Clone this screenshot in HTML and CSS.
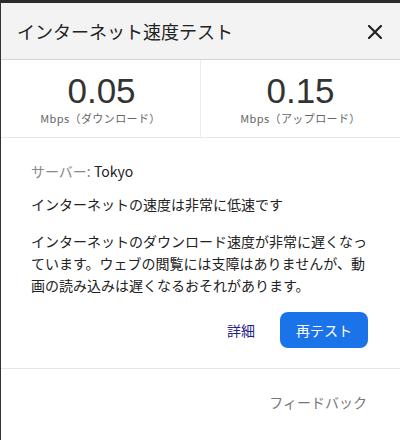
FILE: index.html
```html
<!DOCTYPE html>
<html lang="ja">
<head>
  <meta charset="UTF-8" />
  <meta name="viewport" content="width=device-width, initial-scale=1.0"/>
  <title>インターネット速度テスト</title>
  <link rel="stylesheet" href="styles.css">
</head>
<body>

<div class="dialog">
  <div class="header">
    <h1>インターネット速度テスト</h1>
    <button class="close" aria-label="閉じる">
      <svg width="14" height="14" viewBox="0 0 14 14">
        <path d="M1 1 L13 13 M13 1 L1 13" stroke="#222" stroke-width="2.2" stroke-linecap="square" fill="none"/>
      </svg>
    </button>
  </div>

  <div class="speeds">
    <div class="speed">
      <div class="value">0.05</div>
      <div class="unit">Mbps（ダウンロード）</div>
    </div>
    <div class="speed">
      <div class="value">0.15</div>
      <div class="unit">Mbps（アップロード）</div>
    </div>
  </div>

  <div class="content">
    <p class="server"><span class="muted">サーバー:</span> Tokyo</p>
    <p class="summary">インターネットの速度は非常に低速です</p>
    <p class="detail">インターネットのダウンロード速度が非常に遅くなっています。ウェブの閲覧には支障はありませんが、動画の読み込みは遅くなるおそれがあります。</p>
    <div class="actions">
      <a href="#" class="link">詳細</a>
      <button class="primary">再テスト</button>
    </div>
  </div>

  <div class="footer">
    <a href="#">フィードバック</a>
  </div>
</div>

</body>
</html>
```

FILE: styles.css
```css
body {
  margin: 0;
  background: #fff;
  font-family: "Noto Sans CJK JP", "Liberation Sans", sans-serif;
  color: #222;
}
.dialog {
  height: 437px;
  border-top: 3px solid #2b2b2b;
  border-left: 1px solid #333;
  background: white;
}
.header {
  height: 56px;
  background: #f3f3f3;
  border-bottom: 1px solid #d4d4d4;
  display: flex; align-items: center; justify-content: space-between;
  padding: 0 18px 0 16px;
}
.header h1 {
  margin: 0; font-size: 18px; font-weight: normal; color: #222;
  line-height: 24px;
}
.close {
  background: none; border: none; padding: 0; cursor: pointer;
  display: flex; margin-top: 1px;
}
.speeds {
  display: grid; grid-template-columns: 200px 1fr;
  border-bottom: 1px solid #e8e8e8;
}
.speed {
  text-align: center;
  padding: 13px 0 12px;
}
.speed:first-child { border-right: 1px solid #ececec; }
.value {
  font-family: "Liberation Sans", Arial, sans-serif;
  font-size: 35px; line-height: 35px; color: #333;
}
.speed:first-child .value { padding-left: 2px; }
.unit {
  font-size: 11px; line-height: 14px; color: #666;
  letter-spacing: 0.4px; margin-top: 3px;
}
.content { padding: 0 30px; }
.content p { margin: 0; font-size: 14px; color: #222; }
.server { padding-top: 23px; line-height: 20px; color: #333; }
.muted { color: #888; }
.summary { margin-top: 13px !important; line-height: 20px; }
.detail { margin-top: 16px !important; line-height: 22px; }
.actions {
  display: flex; justify-content: flex-end; align-items: center;
  gap: 25px; margin-top: 16px; padding-right: 2px;
}
.link {
  color: #1f2288; text-decoration: none; font-size: 14px;
}
.primary {
  width: 88px; height: 36px;
  background: #1a73e8; color: white; border: none; border-radius: 8px;
  font-family: inherit; font-size: 14px; cursor: pointer;
}
.footer {
  margin-top: 20px;
  border-top: 1px solid #e6e6e6;
  text-align: right;
  padding: 20px 33px 0 0;
}
.footer a {
  color: #777; text-decoration: none; font-size: 14px; line-height: 20px;
}
```
